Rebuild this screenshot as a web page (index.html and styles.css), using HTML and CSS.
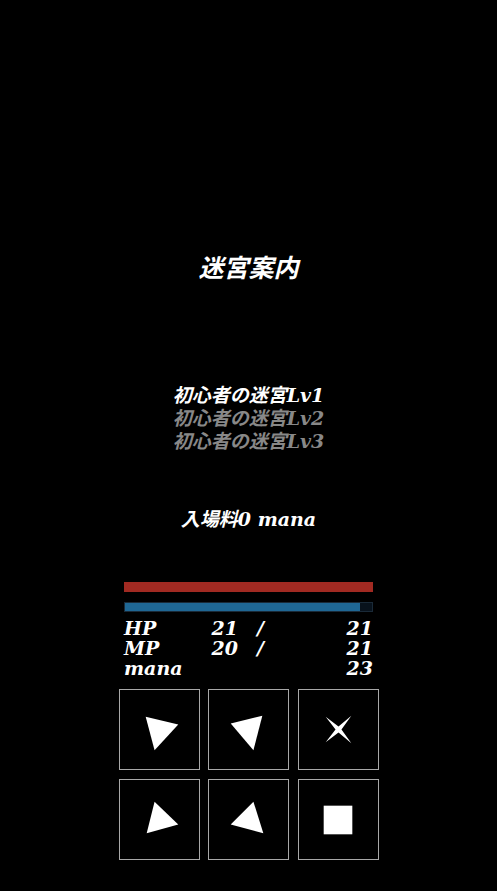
FILE: index.html
```html
<!DOCTYPE html>
<html lang="ja">
<head>
<meta charset="utf-8">
<title>迷宮案内</title>
<link rel="stylesheet" href="styles.css">
</head>
<body>
<main class="screen">
  <h1 class="title">迷宮案内</h1>
  <ul class="levels">
    <li class="level active">初心者の迷宮Lv1</li>
    <li class="level">初心者の迷宮Lv2</li>
    <li class="level">初心者の迷宮Lv3</li>
  </ul>
  <p class="fee">入場料0 mana</p>
  <section class="status">
    <div class="bar hp"><div class="fill" style="width:100%"></div></div>
    <div class="bar mp"><div class="fill" style="width:95.24%"></div></div>
    <div class="stats">
      <span class="label">HP</span><span class="cur">21</span><span class="sep">/</span><span class="max">21</span>
      <span class="label">MP</span><span class="cur">20</span><span class="sep">/</span><span class="max">21</span>
      <span class="label">mana</span><span class="cur"></span><span class="sep"></span><span class="max">23</span>
    </div>
  </section>
  <div class="pad">
    <button class="key" aria-label="right"><svg viewBox="0 0 80 80"><polygon points="26,27 59,35 35,61"/></svg></button>
    <button class="key" aria-label="left"><svg viewBox="0 0 80 80"><polygon points="22,34 54,26 45,61"/></svg></button>
    <button class="key" aria-label="close"><svg viewBox="0 0 80 80"><polygon points="27,27 40,37 53,26 43,40 53,54 40,43 27,53 37,40"/></svg></button>
    <button class="key" aria-label="up-right"><svg viewBox="0 0 80 80"><polygon points="35,22 59,45 27,54"/></svg></button>
    <button class="key" aria-label="up-left"><svg viewBox="0 0 80 80"><polygon points="45,22 22,45 55,54"/></svg></button>
    <button class="key" aria-label="stop"><svg viewBox="0 0 80 80"><rect x="25" y="26" width="29" height="29"/></svg></button>
  </div>
</main>
</body>
</html>
```
FILE: styles.css
```css
html, body {
  margin: 0;
  padding: 0;
  background: #000;
}
body {
  color: #fff;
  font-family: "DejaVu Serif", "Noto Sans CJK JP", serif;
  font-style: italic;
  font-weight: bold;
}
.screen {
  display: flex;
  flex-direction: column;
  align-items: center;
  padding-top: 254px;
}
.title {
  margin: 0;
  font-size: 25px;
  line-height: 30px;
  font-weight: bold;
}
.levels {
  list-style: none;
  margin: 100px 0 0;
  padding: 0;
  text-align: center;
}
.level {
  font-size: 19px;
  line-height: 23px;
  color: #888;
}
.level.active {
  color: #fff;
}
.fee {
  margin: 54px 0 0;
  font-size: 19px;
  line-height: 24px;
}
.status {
  margin-top: 51px;
  width: 249px;
}
.bar {
  height: 10px;
  background: #08121c;
  box-sizing: border-box;
}
.bar.hp .fill {
  background: #a12a22;
}
.bar.mp {
  margin-top: 10px;
  border: 1px solid #1a2a38;
}
.bar.mp .fill {
  background: #1f6794;
}
.fill {
  height: 100%;
}
.stats {
  margin-top: 6px;
  display: grid;
  grid-template-columns: 80px 34px 40px 1fr;
  font-size: 19px;
  line-height: 20px;
}
.cur, .max {
  text-align: right;
}
.sep {
  padding-left: 19px;
}
.pad {
  margin-top: 11px;
  display: grid;
  grid-template-columns: repeat(3, 81px);
  grid-auto-rows: 81px;
  column-gap: 8.5px;
  row-gap: 9px;
}
.key {
  margin: 0;
  padding: 0;
  background: #000;
  border: 1px solid #a8a8a8;
  display: block;
  width: 81px;
  height: 81px;
  box-sizing: border-box;
}
.key svg {
  display: block;
  width: 79px;
  height: 79px;
  fill: #fff;
}
```
